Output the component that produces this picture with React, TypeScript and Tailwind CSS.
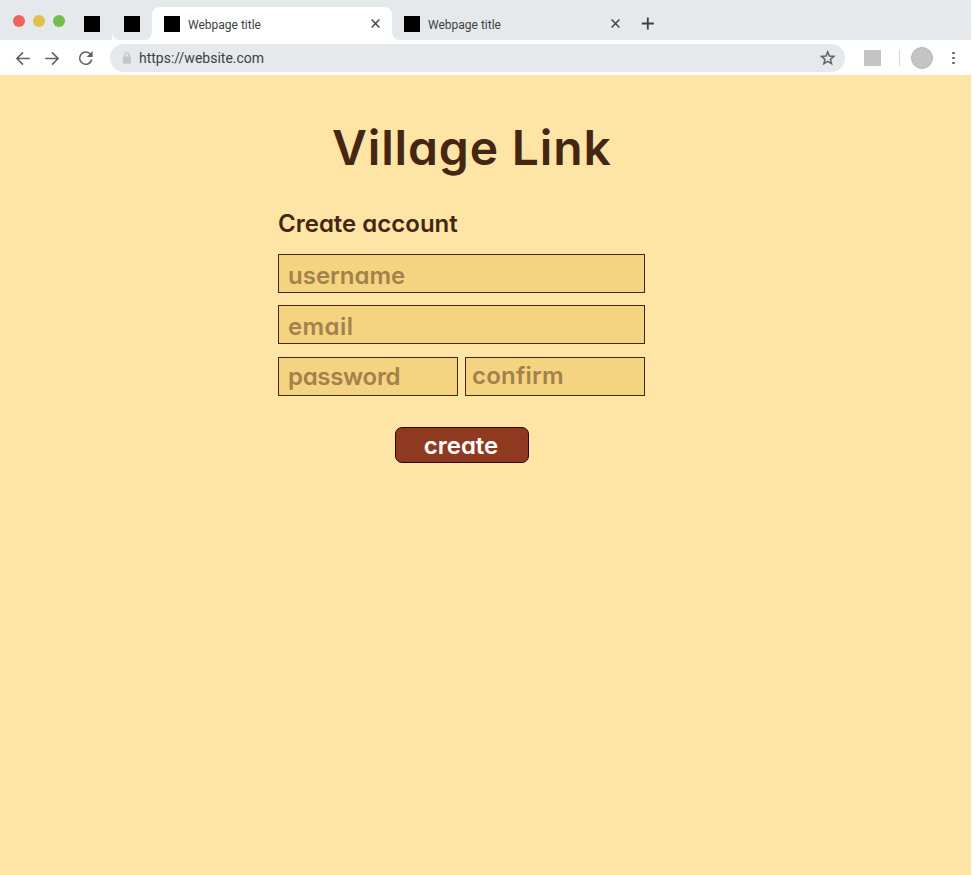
import type { ReactNode } from "react";

function Favicon() {
  return <span className="size-4 shrink-0 bg-black" />;
}

function CloseIcon() {
  return (
    <svg width="9" height="9" viewBox="0 0 9 9" className="shrink-0" stroke="#3c4043" strokeWidth="1.4" fill="none">
      <path d="M.6.6 8.4 8.4M8.4.6.6 8.4" />
    </svg>
  );
}

function TabContent({ title }: { title: string }) {
  return (
    <>
      <Favicon />
      <span className="ml-2 flex-1 pt-[2px] text-[12px] leading-4 text-[#3c4043]">{title}</span>
      <CloseIcon />
    </>
  );
}

function TabStrip() {
  return (
    <div className="flex h-10 bg-[#e5e9ec]">
      <div className="flex w-28 shrink-0 items-start pl-[13px]">
        <div className="flex gap-2 pt-[15px]">
          <span className="size-3 rounded-full bg-[#ed6559]" />
          <span className="size-3 rounded-full bg-[#e1c04c]" />
          <span className="size-3 rounded-full bg-[#72be47]" />
        </div>
        <div className="ml-[19px] flex pt-4"><Favicon /></div>
      </div>
      <div className="flex w-10 shrink-0 bg-[linear-gradient(to_bottom,#e5e9ec_30px,#fff_30px)]">
        <div className="flex w-full rounded-b-lg bg-[#e5e9ec] pt-4 pl-3"><Favicon /></div>
      </div>
      <div className="mt-[7px] flex w-60 shrink-0 items-center rounded-t-lg bg-white pr-[12px] pl-3">
        <TabContent title="Webpage title" />
      </div>
      <div className="flex flex-1 bg-[linear-gradient(to_bottom,#e5e9ec_30px,#fff_30px)]">
        <div className="flex flex-1 rounded-bl-lg bg-[#e5e9ec] pt-[7px]">
          <div className="flex w-60 items-center pr-[12px] pl-3">
            <TabContent title="Webpage title" />
          </div>
          <svg width="13" height="13" viewBox="0 0 13 13" className="mt-[10px] ml-[9px]" stroke="#3c4043" strokeWidth="1.8">
            <path d="M6.8.5v12M.8 6.5h12" />
          </svg>
        </div>
      </div>
    </div>
  );
}

function Toolbar() {
  return (
    <div className="flex h-[35px] items-center bg-white">
      <svg width="110" height="35" viewBox="0 0 110 35" fill="none" stroke="#5f6368" strokeWidth="1.6" className="shrink-0">
        <path d="M29.8 18.5H17.2M23 12.4l-6.1 6.1 6.1 6.1M45.2 18.5h12.6M52 12.4l6.1 6.1-6.1 6.1" />
        <path d="M90.7 14.6a6.1 6.1 0 1 0 1 4.9" />
        <path d="M92.6 11v6h-6z" fill="#5f6368" stroke="none" />
      </svg>
      <div className="mt-px flex h-7 w-[735px] items-center rounded-full bg-[#e5e9ec] pr-[9px] pl-[13px]">
        <svg width="8" height="12" viewBox="0 0 8 12" fill="none" className="shrink-0">
          <path d="M1.9 5V3a2.1 2.1 0 0 1 4.2 0v2" stroke="#c4c4c4" strokeWidth="1.2" />
          <rect y="4.4" width="8" height="7.4" rx="1" fill="#c4c4c4" />
        </svg>
        <span className="ml-2 flex-1 text-[14px] leading-4 text-[#3c4043]">https://website.com</span>
        <svg width="16" height="16" viewBox="0 0 16 16" fill="none" stroke="#5f6368" strokeWidth="1.5" className="shrink-0">
          <path d="m7.7 1.9 1.7 4.2 4.5.35-3.45 2.9 1.1 4.4L7.7 11.4l-3.85 2.35 1.1-4.4-3.45-2.9 4.5-.35z" />
        </svg>
      </div>
      <span className="mt-px ml-[19px] size-[16.5px] bg-[#c4c4c4]" />
      <span className="ml-[18.5px] h-4 w-px bg-[#d3d5d7]" />
      <span className="ml-[11px] size-[22px] rounded-full border-[1.5px] border-[#b4b4b4] bg-[#c4c4c4]" />
      <span className="mt-px ml-[19px] flex flex-col gap-[2.5px]">
        <i className="size-[2.6px] rounded-full bg-[#5f6368]" />
        <i className="size-[2.6px] rounded-full bg-[#5f6368]" />
        <i className="size-[2.6px] rounded-full bg-[#5f6368]" />
      </span>
    </div>
  );
}

function Field({ children, className }: { children: ReactNode; className: string }) {
  return (
    <div className={"h-[39px] border border-[#442612] bg-[#f4d481] text-[24px] leading-[30px] text-[#a2824b] " + className}>
      {children}
    </div>
  );
}

export default function App() {
  return (
    <div className="h-[875px] w-[973px] overflow-hidden bg-white font-['Roboto',sans-serif]">
      <div className="flex h-full w-[971px] flex-col">
        <TabStrip />
        <Toolbar />
        <main className="flex-1 bg-[#ffe5a5] pt-[43px] font-['Inter',sans-serif] font-semibold text-[#442612] [font-feature-settings:'cv11'_1]">
          <h1 className="ml-[332px] text-[48px] leading-[60px] tracking-[0.85px] whitespace-nowrap">Village Link</h1>
          <section className="ml-[278px] w-[367px]">
            <h2 className="mt-[31px] text-[24px] leading-[30px]">Create account</h2>
            <Field className="mt-[15px] pt-[6px] pl-[9px]">username</Field>
            <Field className="mt-[12px] pt-[6px] pl-[9px] tracking-[0.4px]">email</Field>
            <div className="mt-[13px] flex gap-[7px]">
              <Field className="w-[180px] pt-[4px] pl-[9px] tracking-[-0.3px]">password</Field>
              <Field className="w-[180px] pt-[3px] pl-[6px] tracking-[0.2px]">confirm</Field>
            </div>
            <button className="mt-[31px] ml-[117px] block h-9 w-[134px] rounded-[7px] border border-[#350505] bg-[#8f3921] pt-px pr-[2px] text-center text-[24px] leading-[34px] text-white">
              create
            </button>
          </section>
        </main>
      </div>
    </div>
  );
}
